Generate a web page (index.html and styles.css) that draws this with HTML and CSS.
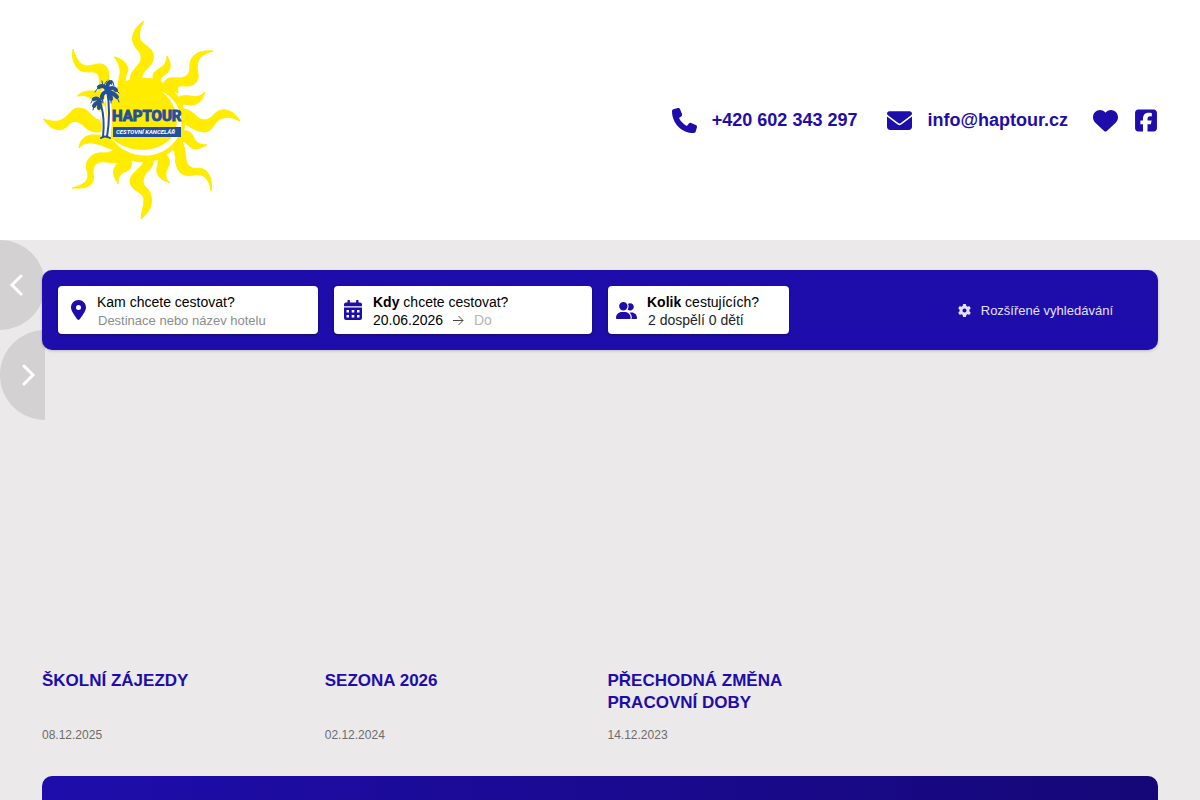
FILE: index.html
```html
<!DOCTYPE html>
<html lang="cs">
<head>
<meta charset="utf-8">
<meta name="viewport" content="width=device-width, initial-scale=1">
<title>HAPTOUR – cestovní kancelář</title>
<link rel="stylesheet" href="styles.css">
</head>
<body>
<header class="header">
  <a class="logo" href="#" aria-label="HAPTOUR cestovní kancelář">
    <svg class="logo-image" viewBox="42 20 200 200">
      <g fill="#ffec00" stroke="#ffec00" stroke-width="1" stroke-linejoin="round">
        <path d="M144 21C136 26 131 34 133 42C135 50 142 51 141 59C140 67 131 68 130 80L141 80C142 69 154 67 153.500 56C153 46 140 45 139.500 37C139 31 141 27 144 21Z"/>
        <path d="M213 51C202 50 191 53 190 64C190 72 189 77 180 78C172 78 166 76 163 85L178 93C176 84 181 86 188 86C195 86 199 80 198 74C196 64 197 55 213 51Z"/>
        <path d="M167 56C167 65 161 67 156 71C153 73 152 77 154 82L161 82C159 77 165 75 168 72C172 67 170 61 167 56Z"/>
        <path d="M205 92C200 97 196 97 190 96C184 95 180 96 177 98L181 107C182 102 186 105 191 105C199 105 203 99 205 92Z"/>
        <path d="M240 121C236 114 229 109 222 110C214 111 213 119 205 120C196 120 194 110 184 109L184 124C190 126 196 132 205 132C215 131 213 120 223 118C230 116 235 119 240 121Z"/>
        <path d="M207 145C198 145 195 141 193 136C191 132 187 130 184 131L180 141C186 140 188 147 194 149C199 149 203 147 207 145Z"/>
        <path d="M211 191C213 181 209 171 203 169C197 167 194 171 188 165C184 160 187 148 181 140L173 149C177 154 174 160 177 167C180 175 187 177 194 175C204 172 210 181 211 191Z"/>
        <path d="M170 183C163 177 166 171 169 165C171 159 167 155 164 153L158 157C159 165 155 169 158 175C161 180 166 181 170 183Z"/>
        <path d="M141 219C150 212 154 203 150 193C148 187 143 187 143 181C144 170 155 170 153 158L145 159C142 169 132 171 130 180C130 192 142 190 144 199C144 207 141 213 141 219Z"/>
        <path d="M118 184C118 177 120 173 127 171C133 168 131 163 131 158L122 156C121 161 116 163 114 169C112 175 116 179 118 184Z"/>
        <path d="M72 188C79 186 87 184 88 176C88 171 85 168 87 162C90 155 97 152 104 153C109 153 112 151 115 149L126 158C119 164 115 163 107 162C99 161 94 163 93 170C93 177 95 181 90 185C85 189 78 188 72 188Z"/>
        <path d="M79 148C80 140 84 136 91 135C98 135 101 135 106 136L114 150C104 147 99 143 91 143C85 143 82 144 79 148Z"/>
        <path d="M43 119C50 121 57 123 63 119C69 116 71 108 79 108C89 108 91 118 99 120L104 131C97 133 90 132 85 127C80 122 74 119 69 124C65 129 61 131 55 129C49 127 47 123 43 119Z"/>
        <path d="M77 96C85 89 96 90 105 94L101 112C94 108 95 98 86 96C83 95 80 96 77 96Z"/>
        <path d="M73 49C75 56 79 65 86 66C93 66 99 62 104 65C110 68 109 75 108 86L98 92C100 83 101 73 94 72C86 71 81 74 76 66C72 60 72 54 73 49Z"/>
        <path d="M114 57C121 58 127 63 128 69C128 73 124 76 126 82L118 86C118 79 121 76 120 69C119 64 117 60 114 57Z"/>
        <circle cx="143" cy="120" r="42"/>
      </g>
      <path fill="#fff" d="M161 91C177 98 185 116 180 132C171 158 132 166 111 138C130 155 159 153 172 137C182 122 176 102 161 91Z"/>
      <path fill="none" stroke="#fff" stroke-width="5" d="M102 106Q105 118 104 137M107 92Q111 112 108 137"/>
      <g fill="none" stroke="#24509a" stroke-linecap="round" stroke-linejoin="round">
        <path stroke-width="2" d="M101 105Q105 118 103 137M107 90Q111 112 107 137"/>
        <path stroke-width="2" d="M101 138Q105 135 110 138"/>
        <path stroke-width="4" d="M107 90Q104 84 99 87M107 90Q107 82 111 82M107 90Q113 86 116 90M107 91Q114 93 117 97M107 91Q101 94 102 98M107 91Q111 95 111 99"/>
        <path stroke-width="4" d="M100 102Q98 97 94 99M100 102Q95 103 94 106M100 102Q99 105 99 108"/>
        <path stroke-width="1" d="M98 88L95 92M103 87L102 81M112 85L109 80M113 82L114 86M115 89L119 93M117 97L119 102M93 99L91 103M94 106L93 110M102 98L103 103M111 99L111 103M104 85L107 81"/>
      </g>
      <text class="logo-name" x="112" y="121">HAPTOUR</text>
      <rect x="113" y="127" width="68" height="10" fill="#24509a"/>
      <text class="logo-tag" x="116" y="134">CESTOVNÍ KANCELÁŘ</text>
    </svg>
  </a>
  <nav class="contacts">
    <a class="contact" href="tel:+420602343297">
      <svg class="contact-icon" viewBox="0 0 512 512"><path d="M164.900 24.600c-7.700-18.600-28-28.500-47.400-23.200l-88 24C12.100 30.200 0 46 0 64C0 311.400 200.600 512 448 512c18 0 33.800-12.100 38.600-29.500l24-88c5.300-19.400-4.600-39.700-23.200-47.400l-96-40c-16.300-6.800-35.200-2.100-46.300 11.600L304.700 368C234.300 334.700 177.300 277.700 144 207.300L193.300 167c13.700-11.200 18.400-30 11.600-46.300l-40-96z"/></svg>
      <span>+420 602 343 297</span>
    </a>
    <a class="contact" href="mailto:info@haptour.cz">
      <svg class="contact-icon" viewBox="0 0 512 512"><path d="M48 64C21.500 64 0 85.500 0 112c0 15.100 7.100 29.300 19.200 38.400L236.800 313.600c11.400 8.500 27 8.500 38.400 0L492.800 150.400c12.100-9.100 19.200-23.300 19.200-38.400c0-26.500-21.500-48-48-48H48zM0 176V384c0 35.300 28.700 64 64 64H448c35.300 0 64-28.700 64-64V176L294.400 339.200c-22.800 17.100-54 17.100-76.800 0L0 176z"/></svg>
      <span>info@haptour.cz</span>
    </a>
    <div class="socials">
      <a class="social" href="#" aria-label="Oblíbené"><svg class="contact-icon" viewBox="0 0 512 512"><path d="M47.600 300.400L228.300 469.100c7.500 7 17.400 10.900 27.700 10.900s20.200-3.900 27.700-10.900L464.400 300.400c30.400-28.300 47.600-68 47.600-109.500v-5.800c0-69.900-50.500-129.500-119.400-141C347 36.500 300.600 51.400 268 84L256 96 244 84c-32.600-32.600-79-47.500-124.600-39.900C50.500 55.600 0 115.200 0 185.100v5.800c0 41.500 17.200 81.200 47.600 109.500z"/></svg></a>
      <a class="social" href="#" aria-label="Facebook"><svg class="facebook-icon" viewBox="0 0 448 512"><path d="M64 32C28.700 32 0 60.700 0 96V416c0 35.300 28.700 64 64 64h98.200V334.200H109.400V256h52.800V222.300c0-87.100 39.400-127.500 125-127.500c16.200 0 44.200 3.200 55.700 6.400V172c-6-.6-16.500-1-29.600-1c-42 0-58.200 15.900-58.200 57.200V256h83.600l-14.400 78.200H255V480H384c35.300 0 64-28.700 64-64V96c0-35.300-28.700-64-64-64H64z"/></svg></a>
    </div>
  </nav>
</header>

<main>
  <section class="hero">
    <div class="slider-nav">
      <button class="slide-button slide-prev" type="button" aria-label="Předchozí"><svg class="chevron" viewBox="0 0 14 24"><path d="M12 3L3 12L12 21"/></svg></button>
      <button class="slide-button slide-next" type="button" aria-label="Další"><svg class="chevron" viewBox="0 0 14 24"><path d="M2 3L11 12L2 21"/></svg></button>
    </div>
    <form class="search">
      <div class="field field-place">
        <svg class="field-icon" viewBox="0 0 384 512"><path d="M215.700 499.200C267 435 384 279.400 384 192C384 86 298 0 192 0S0 86 0 192c0 87.400 117 243 168.300 307.200c12.300 15.300 35.100 15.300 47.400 0zM192 128a64 64 0 1 1 0 128 64 64 0 1 1 0-128z"/></svg>
        <div class="field-body">
          <label for="place">Kam chcete cestovat?</label>
          <input class="place-input" id="place" type="text" placeholder="Destinace nebo název hotelu">
        </div>
      </div>
      <div class="field field-date">
        <svg class="field-icon" viewBox="0 0 18 20"><path fill-rule="evenodd" d="M3.500 1a1.200 1.200 0 0 1 2.400 0V2.500H12.100V1a1.200 1.200 0 0 1 2.400 0V2.500H16A2 2 0 0 1 18 4.500V6.200H0V4.500A2 2 0 0 1 2 2.500H3.500ZM0 7.500H18V18A2 2 0 0 1 16 20H2A2 2 0 0 1 0 18ZM2.500 10V12.500H5V10ZM7.700 10V12.500H10.300V10ZM13 10V12.500H15.500V10ZM2.500 15V17.500H5V15ZM7.700 15V17.500H10.300V15ZM13 15V17.500H15.500V15Z"/></svg>
        <div class="field-body">
          <label for="from"><b>Kdy</b> chcete cestovat?</label>
          <div class="dates">
            <input class="date-from" id="from" type="text" value="20.06.2026">
            <svg class="arrow" viewBox="0 0 11 11"><path d="M0 5.500H10M5.500 1L10 5.500L5.500 10"/></svg>
            <input class="date-to" type="text" placeholder="Do" aria-label="Do">
          </div>
        </div>
      </div>
      <div class="field field-people">
        <svg class="people-icon" viewBox="0 0 640 512"><path d="M96 128a128 128 0 1 1 256 0A128 128 0 1 1 96 128zM0 482.300C0 383.800 79.800 304 178.300 304h91.400C368.200 304 448 383.800 448 482.300c0 16.400-13.300 29.700-29.700 29.700H29.700C13.300 512 0 498.700 0 482.300zM609.300 512H471.400c5.400-9.400 8.600-20.300 8.600-32v-8c0-60.700-27.100-115.200-69.800-151.800c2.400-.1 4.700-.2 7.100-.2h61.400C567.800 320 640 392.200 640 481.300c0 17-13.800 30.700-30.700 30.700zM432 256c-31 0-59-12.600-79.300-32.900C372.400 196.500 384 163.600 384 128c0-26.800-6.600-52.100-18.300-74.300C384.300 40.100 407.200 32 432 32c61.900 0 112 50.100 112 112s-50.100 112-112 112z"/></svg>
        <div class="field-body">
          <label for="people"><b>Kolik</b> cestujících?</label>
          <button class="people-button" id="people" type="button">2 dospělí 0 dětí</button>
        </div>
      </div>
      <button class="advanced" type="button">
        <svg class="gear" viewBox="0 0 512 512"><path d="M495.900 166.600c3.200 8.700 .5 18.400-6.400 24.600l-43.300 39.400c1.100 8.300 1.700 16.800 1.700 25.400s-.6 17.100-1.700 25.400l43.300 39.400c6.900 6.200 9.600 15.900 6.400 24.600c-4.400 11.900-9.700 23.300-15.800 34.300l-4.700 8.100c-6.600 11-14 21.400-22.100 31.200c-5.900 7.200-15.700 9.600-24.500 6.800l-55.700-17.700c-13.400 10.300-28.200 18.900-44 25.400l-12.500 57.100c-2 9.100-9 16.300-18.200 17.800c-13.800 2.300-28 3.500-42.500 3.500s-28.700-1.200-42.500-3.500c-9.200-1.500-16.200-8.700-18.200-17.800l-12.500-57.100c-15.800-6.500-30.600-15.100-44-25.400L83.100 425.900c-8.800 2.800-18.600 .3-24.500-6.800c-8.100-9.800-15.500-20.200-22.100-31.200l-4.700-8.100c-6.100-11-11.400-22.400-15.800-34.300c-3.200-8.700-.5-18.400 6.400-24.600l43.300-39.400C64.600 273.100 64 264.600 64 256s.6-17.100 1.700-25.400L22.400 191.200c-6.900-6.200-9.600-15.900-6.400-24.600c4.400-11.900 9.700-23.300 15.800-34.300l4.700-8.100c6.600-11 14-21.400 22.100-31.200c5.900-7.200 15.700-9.600 24.500-6.800l55.700 17.700c13.400-10.300 28.200-18.900 44-25.400l12.500-57.100c2-9.100 9-16.300 18.200-17.800C227.300 1.200 241.500 0 256 0s28.700 1.200 42.500 3.500c9.200 1.500 16.200 8.700 18.200 17.800l12.500 57.100c15.800 6.500 30.600 15.100 44 25.400l55.700-17.700c8.800-2.800 18.600-.3 24.500 6.800c8.100 9.800 15.500 20.200 22.100 31.200l4.700 8.100c6.100 11 11.400 22.400 15.800 34.300zM256 336a80 80 0 1 0 0-160 80 80 0 1 0 0 160z"/></svg>
        <span>Rozšířené vyhledávání</span>
      </button>
    </form>
  </section>

  <section class="news">
    <article class="news-item"><h2><a href="#">ŠKOLNÍ ZÁJEZDY</a></h2><time datetime="2025-12-08">08.12.2025</time></article>
    <article class="news-item"><h2><a href="#">SEZONA 2026</a></h2><time datetime="2024-12-02">02.12.2024</time></article>
    <article class="news-item"><h2><a href="#">PŘECHODNÁ ZMĚNA PRACOVNÍ DOBY</a></h2><time datetime="2023-12-14">14.12.2023</time></article>
  </section>

  <section class="banner"></section>
</main>
</body>
</html>
```
FILE: styles.css
```css
:root {
  --brand: #1f0dab;
  --edge: 42px;
}

* {
  box-sizing: border-box;
}

body {
  margin: 0;
  background: #ebe9ea;
  color: #000;
  font: 14px/18px "Liberation Sans", Arial, sans-serif;
}

a {
  color: inherit;
  text-decoration: none;
}

svg {
  display: block;
  flex: none;
}

button,
input {
  margin: 0;
  padding: 0;
  border: 0;
  background: none;
  color: inherit;
  font: inherit;
}

button {
  cursor: pointer;
}

.header {
  display: flex;
  align-items: center;
  justify-content: space-between;
  padding: 20px var(--edge);
  background: #fff;
}

.logo-image {
  width: 200px;
  height: 200px;
}

.logo-name {
  fill: #24509a;
  stroke: #24509a;
  stroke-width: 1px;
  font: bold 15px "Liberation Sans Narrow", Roboto, sans-serif;
}

.logo-tag {
  fill: #fff;
  font: italic bold 6px "Liberation Sans Narrow", Roboto, sans-serif;
}

.contacts {
  display: flex;
  align-items: center;
  gap: 30px;
  padding-right: 1px;
  color: var(--brand);
  fill: currentColor;
  font-size: 18px;
  font-weight: bold;
}

.contact {
  display: flex;
  align-items: center;
  gap: 15px;
}

.socials {
  display: flex;
  align-items: center;
  gap: 17px;
  margin-left: -5px;
}

.contact-icon {
  width: 25px;
  height: 25px;
}

.facebook-icon {
  width: 22px;
  height: 25px;
}

.hero {
  position: relative;
  min-height: 430px;
  padding: 30px var(--edge);
}

.slider-nav {
  position: absolute;
  top: 0;
  left: 0;
}

.slide-button {
  display: flex;
  align-items: center;
  width: 45px;
  height: 90px;
  padding: 0 9px;
  background: #d3d1d2;
}

.slide-prev {
  border-radius: 0 45px 45px 0;
}

.slide-next {
  justify-content: flex-end;
  border-radius: 45px 0 0 45px;
}

.chevron {
  width: 14px;
  height: 24px;
  fill: none;
  stroke: #fff;
  stroke-width: 3;
  stroke-linecap: round;
}

.search {
  position: relative;
  display: flex;
  align-items: center;
  gap: 16px;
  padding: 16px;
  border-radius: 10px;
  background: var(--brand);
  box-shadow: 0 1px 3px rgba(0, 0, 0, 0.2);
}

.field {
  display: flex;
  align-items: center;
  height: 48px;
  border-radius: 4px;
  background: #fff;
  box-shadow: 0 1px 3px rgba(0, 0, 0, 0.4);
  fill: var(--brand);
}

.field-place {
  flex: 0 1 260px;
  gap: 11px;
  padding-left: 13px;
}

.field-date {
  flex: 0 1 258px;
  gap: 11px;
  padding-left: 10px;
}

.field-people {
  flex: 0 1 181px;
  gap: 10px;
  padding-left: 8px;
}

.field-body {
  display: flex;
  flex: 1;
  flex-direction: column;
  align-items: flex-start;
  min-width: 0;
  padding-top: 2px;
}

.field-icon {
  height: 20px;
}

.people-icon {
  width: 21px;
  height: 17px;
}

.place-input {
  width: 100%;
  height: 18px;
  padding-top: 2px;
  padding-left: 1px;
  font-size: 13px;
}

.place-input::placeholder {
  color: #8c8c8c;
  opacity: 1;
}

.dates {
  display: flex;
  align-items: center;
}

.date-from {
  width: 80px;
  height: 18px;
}

.arrow {
  width: 11px;
  height: 11px;
  fill: none;
  stroke: #484848;
}

.date-to {
  width: 80px;
  height: 18px;
  padding-left: 10px;
}

.date-to::placeholder {
  color: #b5b5b5;
  opacity: 1;
}

.people-button {
  padding-left: 1px;
  color: #212529;
}

.advanced {
  display: flex;
  align-items: center;
  gap: 10px;
  margin-right: 29px;
  margin-left: auto;
  color: #e4e1f5;
  fill: currentColor;
  font-size: 13px;
  line-height: 19px;
}

.gear {
  width: 13px;
  height: 13px;
}

.news {
  display: grid;
  grid-template-columns: repeat(4, 1fr);
  gap: 15px;
  padding: 0 var(--edge);
}

.news-item {
  display: flex;
  flex-direction: column;
  justify-content: space-between;
  gap: 12px;
}

.news-item h2 {
  margin: 0;
  color: var(--brand);
  font-size: 17px;
  line-height: 22px;
}

.news-item time {
  color: #6c6c6c;
  font-size: 12px;
}

.banner {
  min-height: 160px;
  margin: 32px var(--edge) 0;
  border-radius: 10px;
  background: linear-gradient(to right, #1f0dab, #150777);
}
```
